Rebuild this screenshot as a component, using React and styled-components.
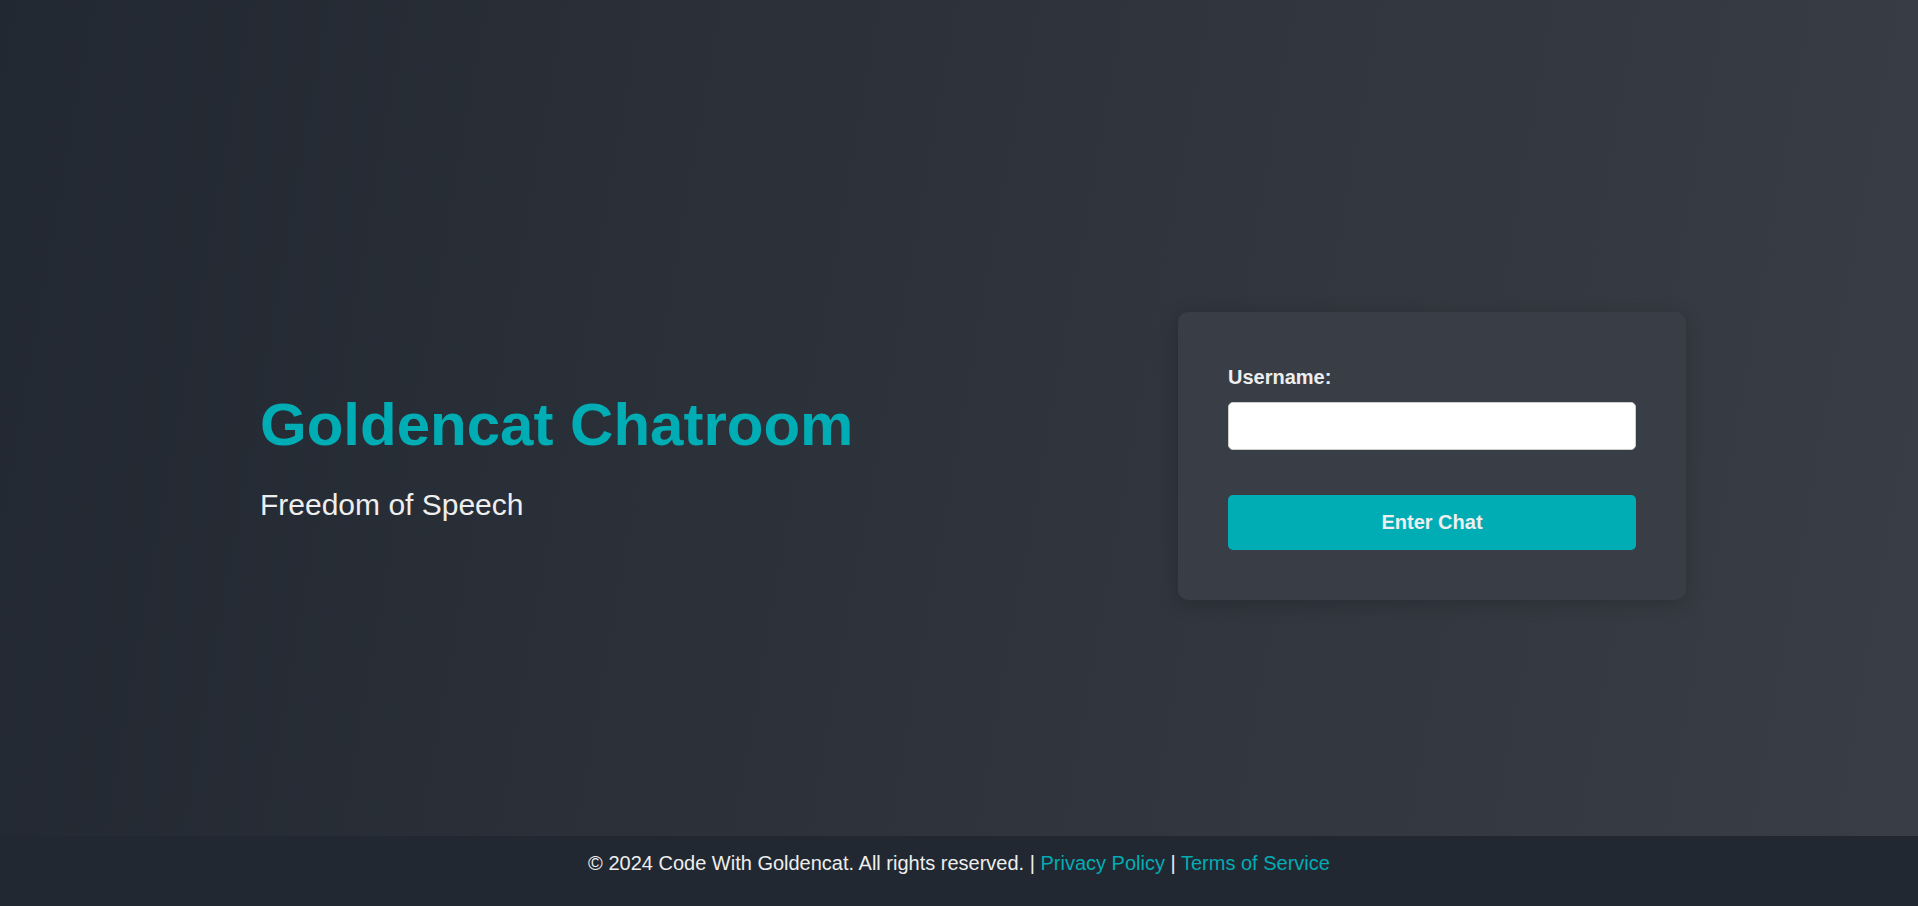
import React from 'react';
import styled, { createGlobalStyle } from 'styled-components';

const GlobalStyle = createGlobalStyle`
	html, body {
		margin: 0;
		padding: 0;
	}
	body {
		font-family: 'Liberation Sans', Arial, sans-serif;
		background: #222831;
		color: #eeeeee;
	}
	* {
		box-sizing: border-box;
	}
`;

const Page = styled.div`
	display: flex;
	flex-direction: column;
	height: 906px;
`;

const Main = styled.main`
	flex: 1;
	display: flex;
	align-items: center;
	justify-content: space-between;
	padding: 76px 232px 0 260px;
	background: linear-gradient(100deg, #222831, #393e46);
`;

const Intro = styled.div`
	display: flex;
	flex-direction: column;
`;

const Title = styled.h1`
	margin: 0 0 29px;
	font-size: 60px;
	font-weight: 700;
	color: #00adb5;
`;

const Tagline = styled.p`
	margin: 0;
	font-size: 30px;
	color: #eeeeee;
`;

const Card = styled.form`
	display: flex;
	flex-direction: column;
	width: 508px;
	padding: 54px 50px 50px;
	background-color: #393e46;
	border-radius: 10px;
	box-shadow: 0 4px 20px rgb(0 0 0 / 20%);
`;

const Label = styled.label`
	font-size: 20px;
	font-weight: 700;
	color: #eeeeee;
	margin-bottom: 13px;
`;

const Input = styled.input`
	height: 48px;
	padding: 0 12px;
	font-size: 18px;
	font-family: inherit;
	border: 1px solid #cccccc;
	border-radius: 5px;
	background: #ffffff;
	margin-bottom: 45px;
	outline: none;
`;

const Button = styled.button`
	height: 55px;
	border: none;
	border-radius: 5px;
	background-color: #00adb5;
	color: #eeeeee;
	font-family: inherit;
	font-size: 20px;
	font-weight: 700;
	cursor: pointer;
`;

const Footer = styled.footer`
	height: 70px;
	padding-top: 16px;
	text-align: center;
	font-size: 20px;
	color: #eeeeee;
	background-color: #222831;
`;

const FooterLink = styled.a`
	color: #00adb5;
	text-decoration: none;
`;

const App = () => {
	return (
		<>
			<GlobalStyle />
			<Page>
				<Main>
					<Intro>
						<Title>Goldencat Chatroom</Title>
						<Tagline>Freedom of Speech</Tagline>
					</Intro>
					<Card onSubmit={(e) => e.preventDefault()}>
						<Label htmlFor='username'>Username:</Label>
						<Input id='username' type='text' />
						<Button type='submit'>Enter Chat</Button>
					</Card>
				</Main>
				<Footer>
					© 2024 Code With Goldencat. All rights reserved. |{' '}
					<FooterLink href='#'>Privacy Policy</FooterLink> |{' '}
					<FooterLink href='#'>Terms of Service</FooterLink>
				</Footer>
			</Page>
		</>
	);
};

export default App;
